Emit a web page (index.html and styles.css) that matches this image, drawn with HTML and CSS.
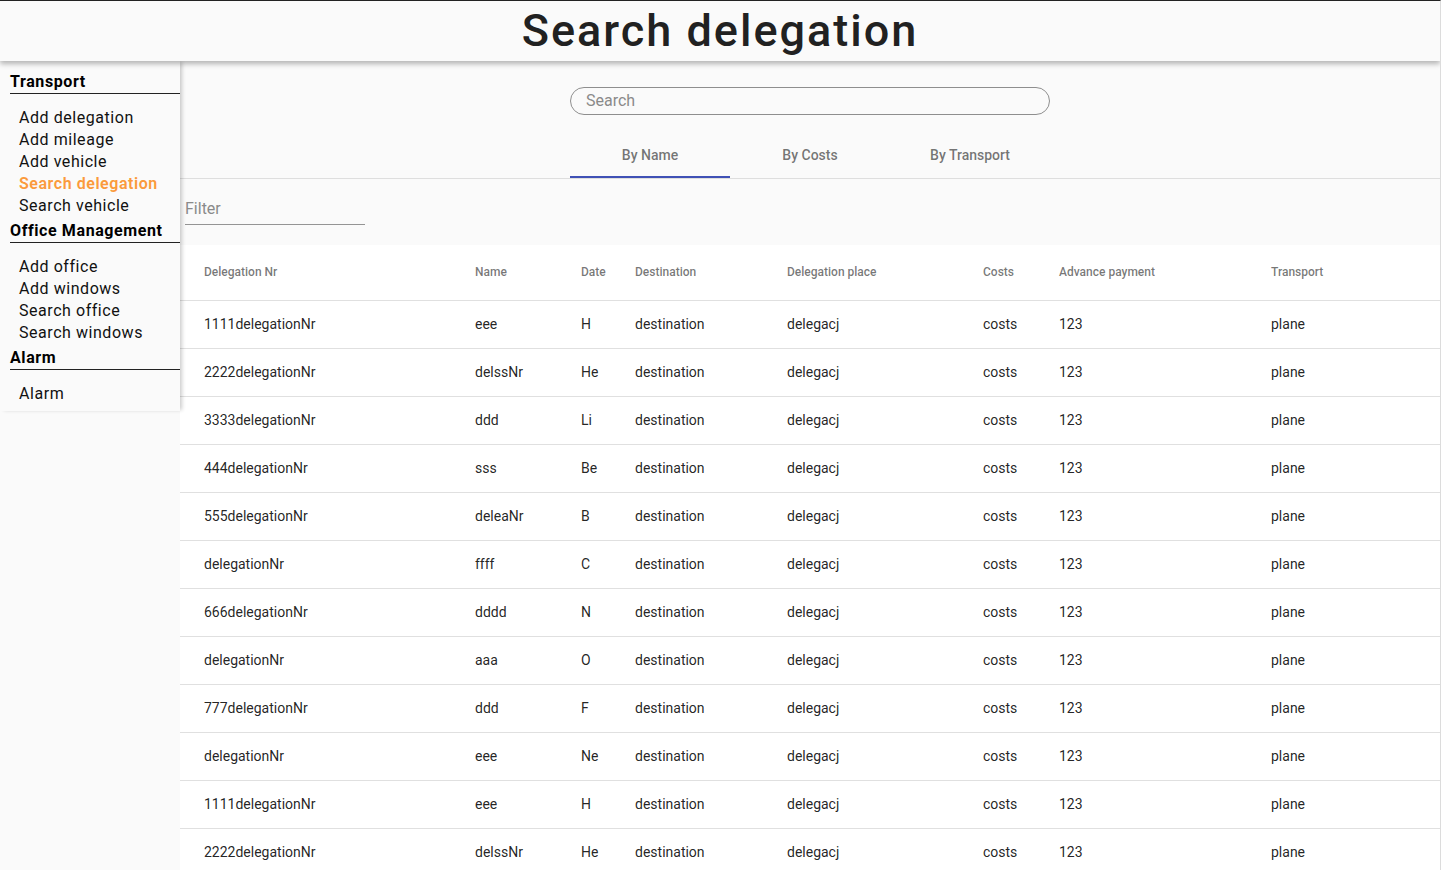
FILE: index.html
```html
<!DOCTYPE html>
<html lang="en">
<head>
<meta charset="utf-8">
<title>Search delegation</title>
<link rel="stylesheet" href="styles.css">
</head>
<body>
<header class="topbar"><h1 class="title">Search delegation</h1></header>
<div class="layout">
  <nav class="sidebar">
    <section class="nav-section">
      <div class="nav-title">Transport</div>
      <ul class="nav-list">
        <li>Add delegation</li>
        <li>Add mileage</li>
        <li>Add vehicle</li>
        <li class="active">Search delegation</li>
        <li>Search vehicle</li>
      </ul>
    </section>
    <section class="nav-section">
      <div class="nav-title">Office Management</div>
      <ul class="nav-list">
        <li>Add office</li>
        <li>Add windows</li>
        <li>Search office</li>
        <li>Search windows</li>
      </ul>
    </section>
    <section class="nav-section">
      <div class="nav-title">Alarm</div>
      <ul class="nav-list">
        <li>Alarm</li>
      </ul>
    </section>
  </nav>
  <main class="content">
    <div class="search-wrap"><div class="search">Search</div></div>
    <div class="tabs">
      <div class="tab active">By Name</div>
      <div class="tab">By Costs</div>
      <div class="tab">By Transport</div>
    </div>
    <div class="filter"><div class="filter-field">Filter</div></div>
    <table class="grid">
      <colgroup>
        <col class="c1"><col class="c2"><col class="c3"><col class="c4"><col class="c5"><col class="c6"><col class="c7"><col class="c8">
      </colgroup>
      <thead>
        <tr><th>Delegation Nr</th><th>Name</th><th>Date</th><th>Destination</th><th>Delegation place</th><th>Costs</th><th>Advance payment</th><th>Transport</th></tr>
      </thead>
      <tbody>
        <tr><td>1111delegationNr</td><td>eee</td><td>H</td><td>destination</td><td>delegacj</td><td>costs</td><td>123</td><td>plane</td></tr>
        <tr><td>2222delegationNr</td><td>delssNr</td><td>He</td><td>destination</td><td>delegacj</td><td>costs</td><td>123</td><td>plane</td></tr>
        <tr><td>3333delegationNr</td><td>ddd</td><td>Li</td><td>destination</td><td>delegacj</td><td>costs</td><td>123</td><td>plane</td></tr>
        <tr><td>444delegationNr</td><td>sss</td><td>Be</td><td>destination</td><td>delegacj</td><td>costs</td><td>123</td><td>plane</td></tr>
        <tr><td>555delegationNr</td><td>deleaNr</td><td>B</td><td>destination</td><td>delegacj</td><td>costs</td><td>123</td><td>plane</td></tr>
        <tr><td>delegationNr</td><td>ffff</td><td>C</td><td>destination</td><td>delegacj</td><td>costs</td><td>123</td><td>plane</td></tr>
        <tr><td>666delegationNr</td><td>dddd</td><td>N</td><td>destination</td><td>delegacj</td><td>costs</td><td>123</td><td>plane</td></tr>
        <tr><td>delegationNr</td><td>aaa</td><td>O</td><td>destination</td><td>delegacj</td><td>costs</td><td>123</td><td>plane</td></tr>
        <tr><td>777delegationNr</td><td>ddd</td><td>F</td><td>destination</td><td>delegacj</td><td>costs</td><td>123</td><td>plane</td></tr>
        <tr><td>delegationNr</td><td>eee</td><td>Ne</td><td>destination</td><td>delegacj</td><td>costs</td><td>123</td><td>plane</td></tr>
        <tr><td>1111delegationNr</td><td>eee</td><td>H</td><td>destination</td><td>delegacj</td><td>costs</td><td>123</td><td>plane</td></tr>
        <tr><td>2222delegationNr</td><td>delssNr</td><td>He</td><td>destination</td><td>delegacj</td><td>costs</td><td>123</td><td>plane</td></tr>
      </tbody>
    </table>
  </main>
</div>
</body>
</html>
```
FILE: styles.css
```css
html {
  overflow: hidden;
}
body {
  margin: 0;
  background: #fafafa;
  font-family: Roboto, "Liberation Sans", sans-serif;
  color: rgba(0, 0, 0, 0.87);
  border-top: 1px solid #222;
  border-right: 1px solid #dcdcdc;
}
.topbar {
  position: relative;
  z-index: 3;
  height: 60px;
  background: #fafafa;
  box-shadow: 0 3px 5px rgba(0, 0, 0, 0.28);
  display: flex;
  justify-content: center;
  align-items: center;
}
.title {
  margin: 0;
  font-size: 45px;
  font-weight: 500;
  letter-spacing: 2px;
  color: #212121;
  line-height: 60px;
}
.layout {
  display: flex;
  align-items: flex-start;
}
.sidebar {
  position: relative;
  z-index: 2;
  flex: 0 0 170px;
  padding: 11px 0 6px 10px;
  background: #fafafa;
  box-shadow: 3px 0 4px -1px rgba(0, 0, 0, 0.2);
}
.nav-section + .nav-section {
  margin-top: 4px;
}
.nav-title {
  font-size: 16px;
  font-weight: 700;
  line-height: 20px;
  letter-spacing: 0.6px;
  color: #000;
  padding-bottom: 1px;
  border-bottom: 1px solid #222;
}
.nav-list {
  list-style: none;
  margin: 13px 0 0;
  padding: 0 0 0 9px;
}
.nav-list li {
  font-size: 16px;
  line-height: 22px;
  letter-spacing: 0.55px;
  color: #111;
}
.nav-list li.active {
  color: #fb9a3c;
  font-weight: 600;
  letter-spacing: 0.55px;
}
.content {
  flex: 1;
  min-width: 0;
}
.search-wrap {
  display: flex;
  justify-content: center;
  padding-top: 26px;
}
.search {
  box-sizing: border-box;
  width: 480px;
  height: 28px;
  border: 1px solid #8e8e8e;
  border-radius: 14px;
  padding-left: 15px;
  font-size: 16px;
  line-height: 26px;
  color: #8a8a8a;
}
.tabs {
  margin-top: 15px;
  display: flex;
  justify-content: center;
  border-bottom: 1px solid #dedede;
}
.tab {
  box-sizing: border-box;
  width: 160px;
  height: 48px;
  padding-top: 3px;
  display: flex;
  align-items: center;
  justify-content: center;
  font-size: 14px;
  font-weight: 500;
  color: rgba(0, 0, 0, 0.55);
  border-bottom: 2px solid transparent;
}
.tab.active {
  border-bottom-color: #3f51b5;
}
.filter {
  padding: 20px 0 20px 5px;
}
.filter-field {
  width: 180px;
  font-size: 16px;
  line-height: 20px;
  color: #8a8a8a;
  padding-bottom: 5px;
  border-bottom: 1px solid #949494;
}
.grid {
  width: 100%;
  table-layout: fixed;
  border-collapse: collapse;
  background: #fff;
}
.c1 { width: 295px; }
.c2 { width: 106px; }
.c3 { width: 54px; }
.c4 { width: 152px; }
.c5 { width: 196px; }
.c6 { width: 76px; }
.c7 { width: 212px; }
.c8 { width: 169px; }
.grid th,
.grid td {
  padding: 0;
  text-align: left;
  border-bottom: 1px solid #e0e0e0;
  white-space: nowrap;
}
.grid th:first-child,
.grid td:first-child {
  padding-left: 24px;
}
.grid th:last-child,
.grid td:last-child {
  padding-right: 24px;
}
.grid th {
  height: 53px;
  padding-bottom: 2px;
  font-size: 12px;
  font-weight: 500;
  color: rgba(0, 0, 0, 0.54);
}
.grid td {
  height: 46px;
  padding-bottom: 1px;
  font-size: 14px;
  color: rgba(0, 0, 0, 0.87);
}
```
